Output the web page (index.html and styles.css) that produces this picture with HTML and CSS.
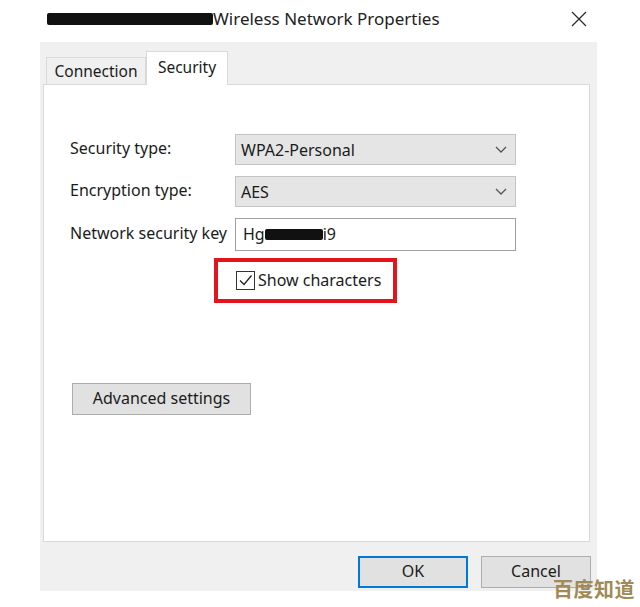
FILE: index.html
```html
<!DOCTYPE html>
<html>
<head>
<meta charset="utf-8">
<link rel="stylesheet" href="styles.css">
</head>
<body>
<div class="page">
  <div class="titlebar">
    <span class="redact-title"></span><span class="title-text">Wireless Network Properties</span>
    <svg class="close" width="16" height="16" viewBox="0 0 16 16"><path d="M1 1 L15 15 M15 1 L1 15" stroke="#2b2b2b" stroke-width="1.3" fill="none"/></svg>
  </div>
  <div class="dialog">
    <div class="tabs">
      <div class="tab">Connection</div>
      <div class="tab active">Security</div>
    </div>
    <div class="panel">
      <div class="form">
        <div class="label">Security type:</div>
        <div class="combo"><span>WPA2-Personal</span><svg class="chev" width="12" height="7" viewBox="0 0 12 7"><path d="M1 1 L6 6 L11 1" stroke="#555" stroke-width="1.3" fill="none"/></svg></div>
        <div class="label">Encryption type:</div>
        <div class="combo"><span>AES</span><svg class="chev" width="12" height="7" viewBox="0 0 12 7"><path d="M1 1 L6 6 L11 1" stroke="#555" stroke-width="1.3" fill="none"/></svg></div>
        <div class="label">Network security key</div>
        <div class="input"><span>Hg</span><span class="redact-key"></span><span>i9</span></div>
      </div>
      <div class="show-row">
        <div class="highlight">
          <span class="checkbox"><svg width="17" height="17" viewBox="0 0 17 17"><path d="M3 8.5 L7 12.5 L14.5 3.5" stroke="#222" stroke-width="1.3" fill="none"/></svg></span>
          <span class="show-text">Show characters</span>
        </div>
      </div>
      <div class="adv-row">
        <div class="button adv">Advanced settings</div>
      </div>
    </div>
    <div class="footer">
      <div class="button ok">OK</div>
      <div class="button">Cancel</div>
    </div>
  </div>
  <div class="watermark">百度知道</div>
</div>
</body>
</html>
```
FILE: styles.css
```css
html, body {
  margin: 0;
  padding: 0;
  background: #ffffff;
}
.page {
  width: 640px;
  height: 607px;
  position: relative;
  font-family: "Noto Sans", "Open Sans", sans-serif;
  color: #1b1b1b;
  overflow: hidden;
}
.titlebar {
  height: 42px;
  display: flex;
  align-items: center;
  padding-left: 47px;
  padding-bottom: 5px;
  box-sizing: border-box;
}
.redact-title {
  display: inline-block;
  width: 166px;
  height: 12px;
  background: #111;
  border-radius: 2px;
  margin-top: 1px;
}
.title-text {
  font-size: 17px;
  color: #222;
}
.close {
  margin-left: auto;
  margin-right: 53px;
}
.dialog {
  margin-left: 40px;
  width: 557px;
  height: 549px;
  background: #f0f0f0;
  display: flex;
  flex-direction: column;
}
.tabs {
  display: flex;
  align-items: flex-end;
  padding-left: 6px;
  height: 42px;
  position: relative;
  z-index: 1;
}
.tab {
  height: 27px;
  width: 100px;
  box-sizing: border-box;
  border: 1px solid #d9d9d9;
  border-bottom: none;
  background: #f0f0f0;
  font-size: 15.5px;
  display: flex;
  align-items: center;
  justify-content: center;
  padding-bottom: 1px;
}
.tab.active {
  height: 34px;
  width: 82px;
  background: #ffffff;
  align-items: flex-start;
  padding-top: 4px;
  margin-bottom: -1px;
}
.panel {
  margin-left: 3px;
  width: 547px;
  height: 458px;
  box-sizing: border-box;
  background: #ffffff;
  border: 1px solid #d9d9d9;
  padding-top: 49px;
}
.form {
  display: grid;
  grid-template-columns: 165px 281px;
  padding-left: 26px;
  row-gap: 11px;
  align-items: center;
}
.label {
  font-size: 16px;
  line-height: 20px;
  padding-bottom: 4px;
}
.combo {
  height: 31px;
  box-sizing: border-box;
  border: 1px solid #c4c4c4;
  background: #e5e5e5;
  display: flex;
  align-items: center;
  padding-left: 5px;
  padding-right: 8px;
  font-size: 16px;
}
.chev {
  margin-left: auto;
}
.input {
  height: 33px;
  box-sizing: border-box;
  border: 1px solid #a0a0a0;
  background: #fff;
  display: flex;
  align-items: center;
  padding-left: 7px;
  padding-bottom: 2px;
  font-size: 16px;
}
.redact-key {
  display: inline-block;
  width: 58px;
  height: 11px;
  background: #111;
  border-radius: 2px;
  margin-top: 2px;
}
.show-row {
  padding-left: 170px;
  padding-top: 7px;
}
.highlight {
  width: 183px;
  height: 45px;
  box-sizing: border-box;
  border: 4px solid #e3141c;
  display: flex;
  align-items: center;
  padding-left: 18px;
  gap: 3px;
}
.checkbox {
  width: 19px;
  height: 19px;
  box-sizing: border-box;
  border: 1px solid #333;
  background: #fff;
  display: flex;
  align-items: center;
  justify-content: center;
}
.show-text {
  font-size: 16px;
  padding-bottom: 2px;
}
.adv-row {
  padding-left: 28px;
  padding-top: 80px;
}
.button {
  width: 110px;
  height: 32px;
  box-sizing: border-box;
  border: 1px solid #adadad;
  background: #e1e1e1;
  display: flex;
  align-items: center;
  justify-content: center;
  font-size: 16px;
  padding-bottom: 2px;
}
.button.adv {
  width: 179px;
}
.button.ok {
  border: 2px solid #0078d7;
}
.footer {
  display: flex;
  justify-content: flex-end;
  gap: 13px;
  padding-right: 6px;
  padding-top: 14px;
}
.watermark {
  position: absolute;
  left: 553px;
  top: 574px;
  font-family: "Noto Sans CJK SC", sans-serif;
  font-size: 20px;
  font-weight: 700;
  color: #a08a56;
  letter-spacing: 0.5px;
}
```
